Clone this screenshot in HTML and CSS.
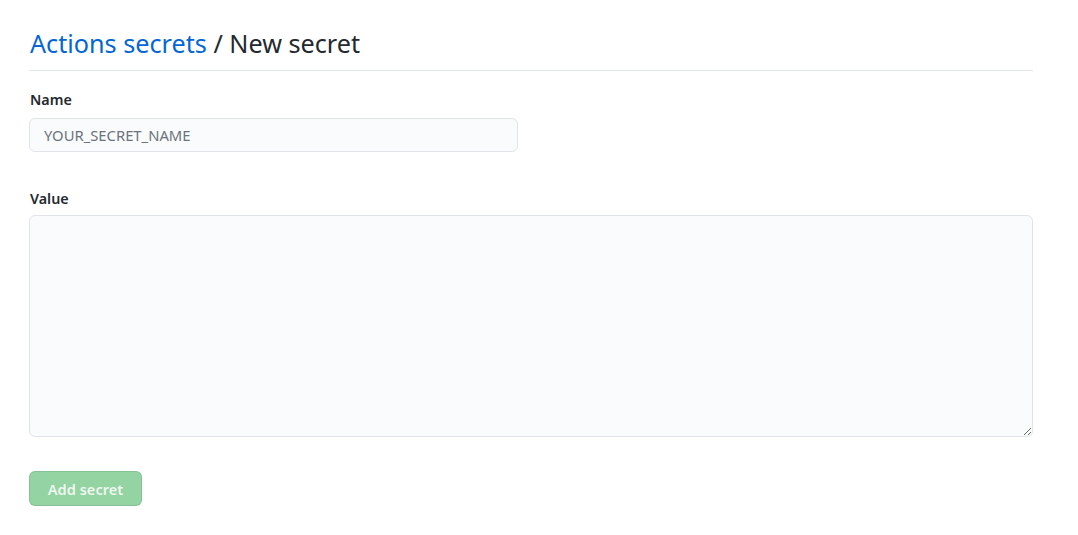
FILE: index.html
```html
<!DOCTYPE html>
<html>
<head>
<meta charset="utf-8">
<link rel="stylesheet" href="styles.css">
</head>
<body>
<div class="page">
  <div class="subhead">
    <h2 class="subhead-heading"><a href="#" class="crumb">Actions secrets</a> / New secret</h2>
  </div>
  <form class="form">
    <div class="form-group">
      <label class="label" for="name">Name</label>
      <input class="input" id="name" type="text" placeholder="YOUR_SECRET_NAME">
    </div>
    <div class="form-group value-group">
      <label class="label" for="value">Value</label>
      <textarea class="textarea" id="value"></textarea>
    </div>
    <button class="btn" type="button" disabled>Add secret</button>
  </form>
</div>
</body>
</html>
```
FILE: styles.css
```css
* { box-sizing: border-box; }
html, body { margin: 0; padding: 0; background: #fff; }
body {
  font-family: "Noto Sans", "Open Sans", "Liberation Sans", sans-serif;
  color: #24292e;
  font-size: 14px;
}
.page {
  width: 1004px;
  margin-left: 29px;
  padding-top: 25px;
}
.subhead {
  border-bottom: 1px solid #e1e4e8;
  padding-bottom: 8px;
  margin-bottom: 19px;
}
.subhead-heading {
  margin: 0;
  font-size: 25.2px;
  font-weight: 400;
  line-height: 37px;
  padding-left: 1px;
}
.crumb { color: #0366d6; text-decoration: none; }
.form-group { display: flex; flex-direction: column; }
.label {
  font-weight: 600;
  font-size: 14.3px;
  line-height: 20px;
  margin-bottom: 8px;
  padding-left: 1px;
}
.input {
  width: 489px;
  height: 34px;
  background: #fafbfc;
  border: 1px solid #e1e4e8;
  border-radius: 6px;
  padding: 5px 14px;
  font-family: inherit;
  font-size: 14.8px;
  color: #24292e;
  outline: none;
}
.input::placeholder { color: #6a737d; }
.value-group { margin-top: 37px; }
.value-group .label { margin-bottom: 6px; }
.textarea {
  width: 1004px;
  height: 222px;
  background: #fafbfc;
  border: 1px solid #e1e4e8;
  border-radius: 6px;
  padding: 8px 14px;
  font-family: inherit;
  font-size: 14px;
  outline: none;
  resize: both;
}
.btn {
  margin-top: 34px;
  width: 113px;
  height: 35px;
  background: #94d3a2;
  border: 1px solid rgba(27,31,35,0.1);
  border-radius: 6px;
  color: rgba(255,255,255,0.85);
  font-family: inherit;
  font-size: 14.6px;
  font-weight: 600;
  padding: 0;
}
```
